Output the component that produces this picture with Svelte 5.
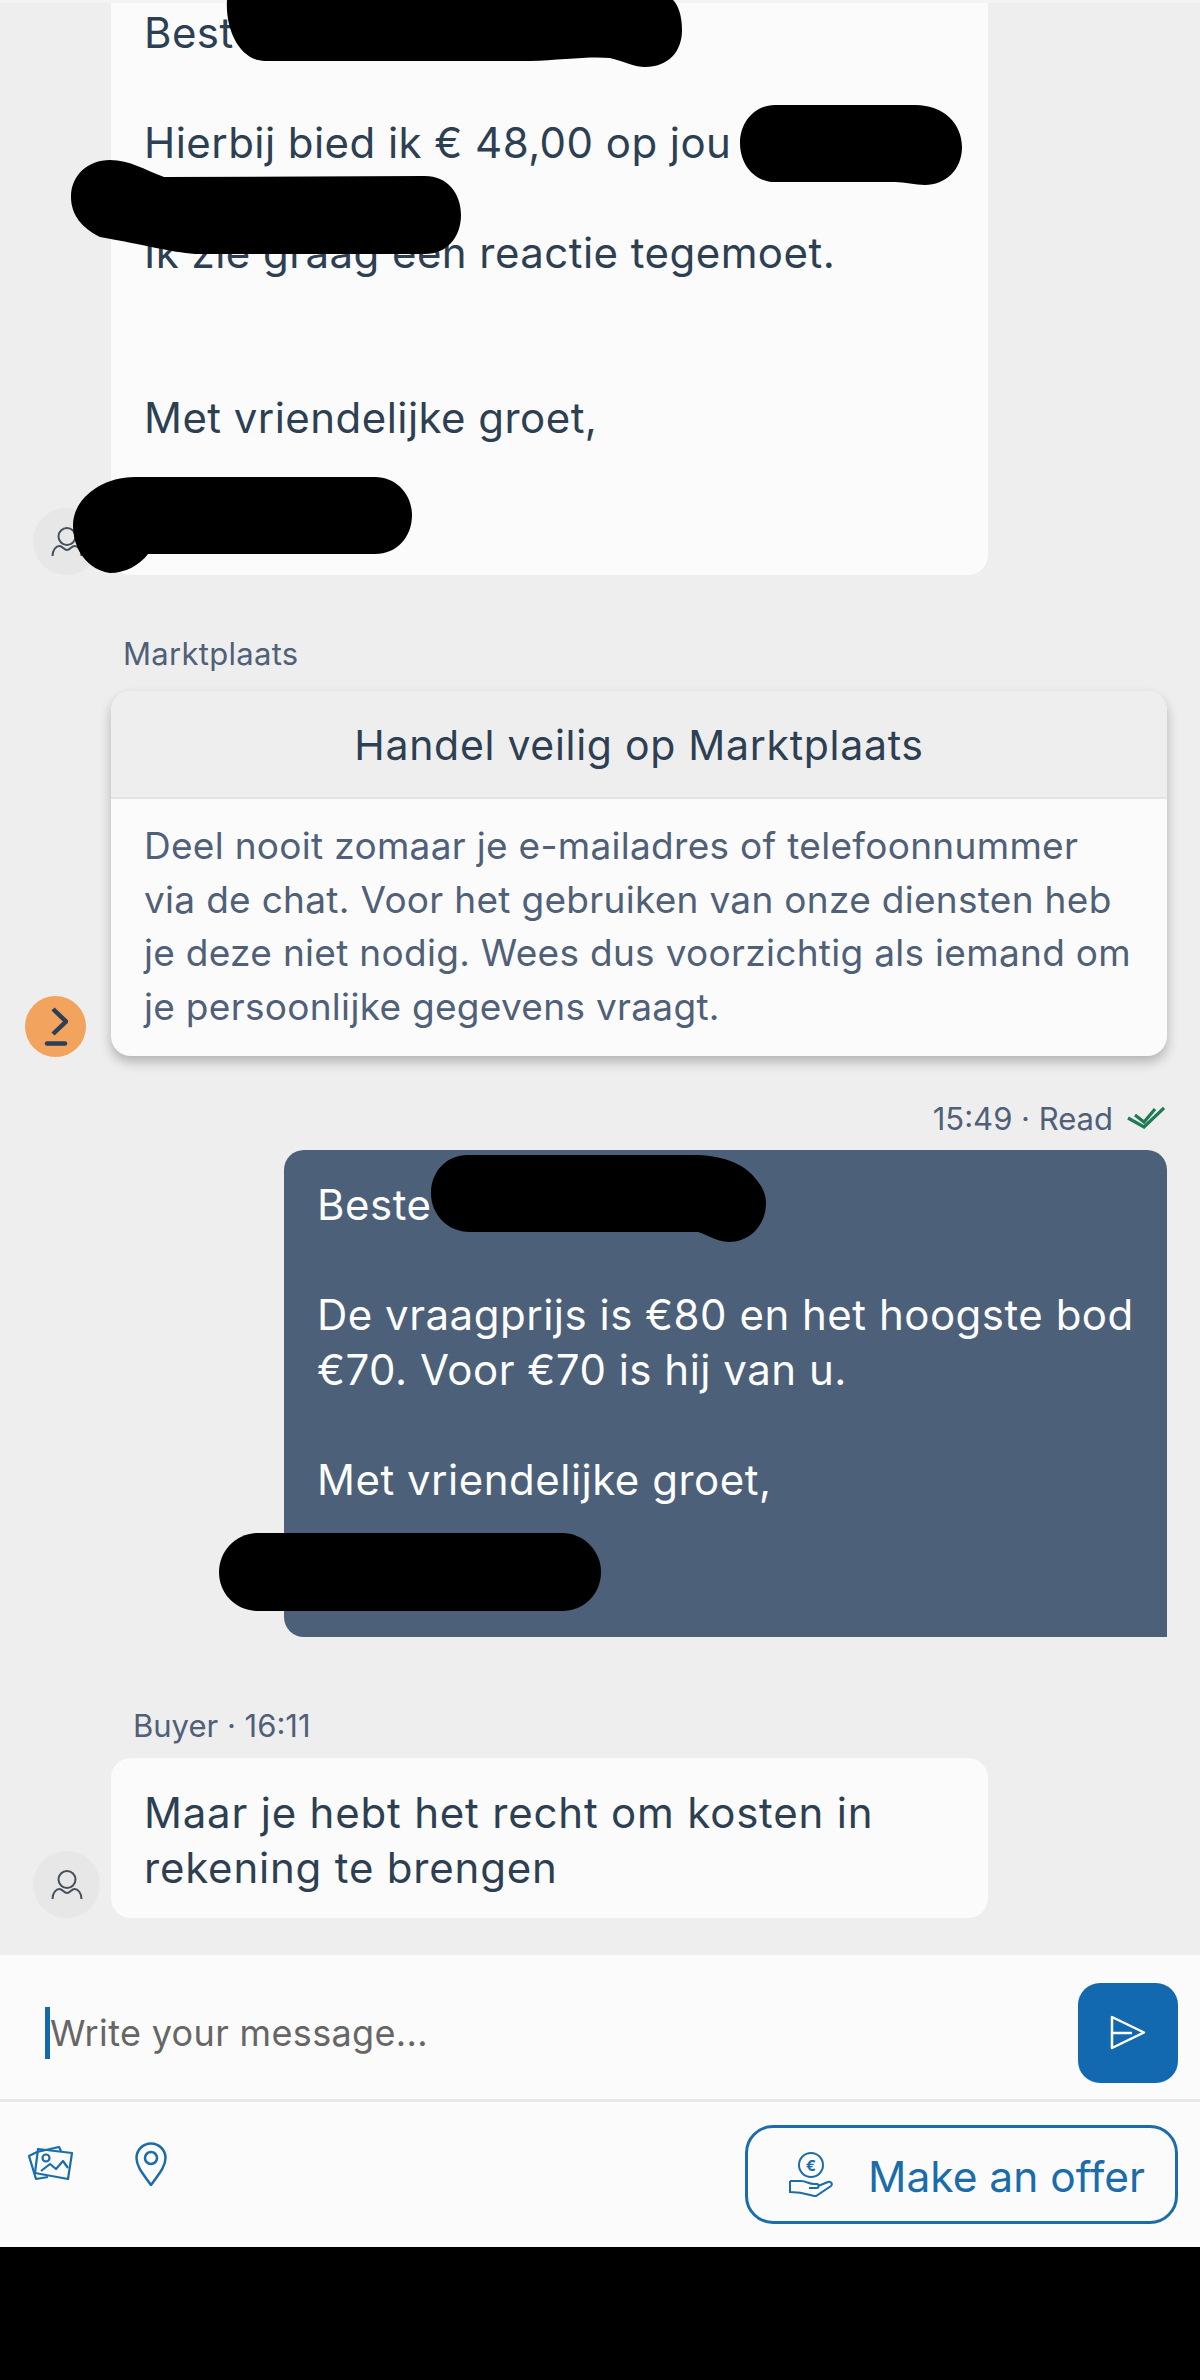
<script>
	// redacted names stay blank lines, the scribbles go over them anyway
	const firstMessage = `Beste

Hierbij bied ik € 48,00 op jou
\u00a0
Ik zie graag een reactie tegemoet.
\u00a0
\u00a0
Met vriendelijke groet,
\u00a0
\u00a0`

	const ownMessage = `Beste

De vraagprijs is €80 en het hoogste bod
€70. Voor €70 is hij van u.

Met vriendelijke groet,
\u00a0
\u00a0`

	const safetyText = `Deel nooit zomaar je e-mailadres of telefoonnummer
via de chat. Voor het gebruiken van onze diensten heb
je deze niet nodig. Wees dus voorzichtig als iemand om
je persoonlijke gegevens vraagt.`
</script>

{#snippet userIcon()}
	<svg width="32" height="32" viewBox="0 0 32 32" fill="none" stroke="#46505c" stroke-width="2">
		<circle cx="16" cy="10.500" r="8.500" />
		<path d="M1.500 30c0-6 3.500-10 7-10 3 0 4.500 4 7.500 4s4.500-4 7.500-4c3.500 0 7 4 7 10" />
	</svg>
{/snippet}

<div class="page">
	<main class="chat">
		<div class="row">
			<div class="avatar">{@render userIcon()}</div>
			<div class="bubble">{firstMessage}</div>
		</div>

		<p class="label system_label">Marktplaats</p>
		<div class="row system_row">
			<div class="system_avatar">
				<svg width="24" height="40" viewBox="0 0 24 40" fill="none" stroke="#2e3f55" stroke-width="4.500">
					<path d="M9 2 22 14.500 9 27" />
					<path d="M3 36.500H21" stroke-linecap="round" />
				</svg>
			</div>
			<div class="card">
				<h2>Handel veilig op Marktplaats</h2>
				<p>{safetyText}</p>
			</div>
		</div>

		<div class="status">
			<span>15:49 · Read</span>
			<svg width="38" height="24" viewBox="0 0 38 24" fill="none" stroke="#217a55" stroke-width="3.200">
				<path d="M1 12l16 9L37 2" />
				<path d="M8 9l9 7L28 3" />
			</svg>
		</div>
		<div class="own_bubble">{ownMessage}</div>

		<p class="label buyer_label">Buyer · 16:11</p>
		<div class="row">
			<div class="avatar">{@render userIcon()}</div>
			<div class="bubble last">Maar je hebt het recht om kosten in
rekening te brengen</div>
		</div>
	</main>

	<footer class="composer">
		<div class="input_row">
			<div class="input"><span class="caret"></span><span class="placeholder">Write your message...</span></div>
			<button class="send" aria-label="Send">
				<svg width="36" height="36" viewBox="0 0 36 36" fill="none" stroke="#fff" stroke-width="2.500" stroke-linejoin="round">
					<path d="M2 2l32 15.500L2 33z" />
					<path d="M2 18h20" />
				</svg>
			</button>
		</div>
		<div class="action_row">
			<div class="tools">
				<svg class="photos" width="46" height="36" viewBox="0 0 46 36" fill="none" stroke="#1a6cab" stroke-width="2.200" stroke-linejoin="round">
					<path d="M9 6 1 10l7 23 12-2" />
					<path d="M9 6l22-5 2 4" />
					<path d="M10 3l34 4-4 26-33-6z" />
					<circle cx="18" cy="12" r="3.500" />
					<path d="M13 25l9-7 6 5 7-8 5 7" />
				</svg>
				<svg width="32" height="44" viewBox="0 0 32 44" fill="none" stroke="#1a6cab" stroke-width="2.500">
					<path d="M16 43C9 33 1.500 25 1.500 16a14.500 14.500 0 0 1 29 0C30.500 25 23 33 16 43z" stroke-linejoin="round" />
					<circle cx="16" cy="16" r="6" />
				</svg>
			</div>
			<button class="offer">
				<svg width="46" height="46" viewBox="0 0 46 46" fill="none" stroke="#1a6cab" stroke-width="2">
					<circle cx="22" cy="13" r="12" />
					<text x="22" y="18.500" text-anchor="middle" class="euro">€</text>
					<path d="M1 29h11c5 0 8 3 13 3h3c2 0 2 4 0 4h-8" />
					<path d="M29 34l10-4c3-1 5 2 3 4L27 44c-4 1-9-4-26-4V29" />
				</svg>
				<span>Make an offer</span>
			</button>
		</div>
	</footer>

	<div class="bottom_bar"></div>

	<!-- redaction scribbles painted over the screenshot -->
	<svg class="scribbles" width="1200" height="2380" viewBox="0 0 1200 2380" fill="#000">
		<path d="M227 0C225 30 240 61 265 61L530 61C560 60 590 56 610 58C625 62 635 67 645 67C668 67 682 52 682 30C682 15 678 5 673 0Z" />
		<path d="M775 105L915 105C945 105 962 125 962 147C962 170 945 185 925 185C915 185 905 182 895 182L775 182C755 182 740 165 740 143C740 122 755 105 775 105Z" />
		<path d="M110 160C130 160 145 170 164 177L425 176C447 176 461 193 461 215C461 237 447 254 425 254L195 254C170 252 145 245 100 237C82 228 71 215 71 197C71 175 88 160 110 160Z" />
		<path d="M135 477L375 477C397 477 412 495 412 515C412 537 397 554 375 554L148 554C140 565 125 573 110 573C88 570 73 550 73 525C73 500 100 477 135 477Z" />
		<path d="M468 1155L698 1155C725 1156 745 1165 755 1178C763 1187 766 1195 766 1203C766 1225 750 1242 729 1242C715 1241 708 1235 698 1232L470 1232C448 1232 431 1215 431 1193C431 1172 446 1155 468 1155Z" />
		<path d="M258 1533L562 1533C584 1533 601 1551 601 1572C601 1594 584 1611 562 1611L258 1611C236 1611 219 1594 219 1572C219 1551 236 1533 258 1533Z" />
	</svg>
</div>

<style>
	:global(body) {
		background: #000;
		font-family: Inter, "Liberation Sans", sans-serif;
	}

	.page {
		position: relative;
		height: 2380px;
		overflow: hidden;
	}

	.chat {
		height: 1955px;
		box-sizing: border-box;
		border-top: 3px solid #f4f4f4;
		padding-bottom: 37px;
		background: #eeeeee;
		display: flex;
		flex-direction: column;
		justify-content: flex-end;
		overflow: hidden;
	}

	.row {
		display: flex;
		align-items: flex-end;
		gap: 11px;
		padding-left: 33px;
		flex-shrink: 0;
	}

	.avatar {
		width: 67px;
		height: 67px;
		border-radius: 50%;
		background: #e7e7e7;
		display: flex;
		align-items: center;
		justify-content: center;
		flex-shrink: 0;
	}

	.bubble {
		width: 877px;
		box-sizing: border-box;
		padding: 27px 20px 20px 33px;
		background: #fbfbfb;
		border-radius: 20px;
		color: #2d3f52;
		font-size: 42px;
		letter-spacing: 0.45px;
		line-height: 55px;
		white-space: pre-line;
	}

	.bubble.last {
		padding-bottom: 23px;
		letter-spacing: 0.8px;
	}

	.label {
		margin: 0;
		color: #4f6078;
		font-size: 31px;
		line-height: 40px;
		flex-shrink: 0;
	}

	.system_label {
		margin-top: 59px;
		padding-left: 123px;
		letter-spacing: 0.3px;
	}

	.system_row {
		margin-top: 17px;
		padding-left: 25px;
		gap: 25px;
	}

	.system_avatar {
		width: 61px;
		height: 61px;
		margin-bottom: -1px;
		border-radius: 50%;
		background: #f2a45f;
		display: flex;
		align-items: center;
		justify-content: center;
		flex-shrink: 0;
	}

	.card {
		width: 1056px;
		border-radius: 20px;
		background: #fbfbfb;
		box-shadow: 0 6px 12px rgba(0, 0, 0, 0.25);
		overflow: hidden;
	}

	.card h2 {
		margin: 0;
		height: 108px;
		box-sizing: border-box;
		border-bottom: 2px solid #e4e4e4;
		background: #eeeeee;
		color: #2d3f52;
		font-size: 41px;
		font-weight: 400;
		letter-spacing: 0.7px;
		line-height: 108px;
		text-align: center;
	}

	.card p {
		margin: 0;
		padding: 20px 20px 23px 33px;
		color: #4f6078;
		font-size: 37px;
		letter-spacing: 0.3px;
		line-height: 53.500px;
		white-space: pre-line;
	}

	.status {
		margin-top: 37px;
		margin-bottom: 7px;
		padding-right: 35px;
		height: 50px;
		display: flex;
		align-items: center;
		justify-content: flex-end;
		gap: 14px;
		color: #4f6078;
		font-size: 31px;
		flex-shrink: 0;
	}

	.own_bubble {
		margin-left: 284px;
		width: 883px;
		box-sizing: border-box;
		flex-shrink: 0;
		padding: 27px 20px 20px 33px;
		background: #4c6079;
		border-radius: 20px 20px 0 20px;
		color: #fdfdfd;
		font-size: 42px;
		letter-spacing: 0.5px;
		line-height: 55px;
		white-space: pre-line;
	}

	.buyer_label {
		margin-top: 69px;
		margin-bottom: 12px;
		padding-left: 133px;
	}

	.composer {
		height: 292px;
		background: #fbfbfb;
	}

	.input_row {
		height: 147px;
		box-sizing: border-box;
		border-bottom: 3px solid #e8e8e8;
		padding: 28px 22px 0 45px;
		display: flex;
		justify-content: space-between;
	}

	.input {
		display: flex;
		align-items: center;
		height: 100px;
	}

	.caret {
		width: 5px;
		height: 52px;
		background: #1469ae;
	}

	.placeholder {
		color: #666666;
		font-size: 36px;
		letter-spacing: 0.35px;
	}

	.send {
		width: 100px;
		height: 100px;
		padding: 0;
		border: none;
		border-radius: 22px;
		background: #1269b0;
		display: flex;
		align-items: center;
		justify-content: center;
	}

	.action_row {
		height: 145px;
		display: flex;
		justify-content: space-between;
		padding: 23px 22px 0 28px;
		box-sizing: border-box;
	}

	.tools {
		display: flex;
		align-items: flex-start;
		gap: 61px;
		padding-top: 17px;
	}

	.photos {
		margin-top: 4px;
	}

	.offer {
		width: 433px;
		height: 99px;
		box-sizing: border-box;
		padding: 0 0 0 41px;
		border: 3px solid #1a6cab;
		border-radius: 28px;
		background: #fbfbfb;
		color: #1a6cab;
		font-family: inherit;
		font-size: 42.500px;
		display: flex;
		align-items: center;
		gap: 33px;
	}

	.offer span {
		padding-top: 4px;
	}

	.euro {
		fill: #1a6cab;
		stroke: none;
		font-family: Inter, sans-serif;
		font-size: 15px;
		font-weight: 700;
	}

	.bottom_bar {
		height: 133px;
		background: #000;
	}

	.scribbles {
		position: absolute;
		top: 0;
		left: 0;
		pointer-events: none;
	}
</style>
